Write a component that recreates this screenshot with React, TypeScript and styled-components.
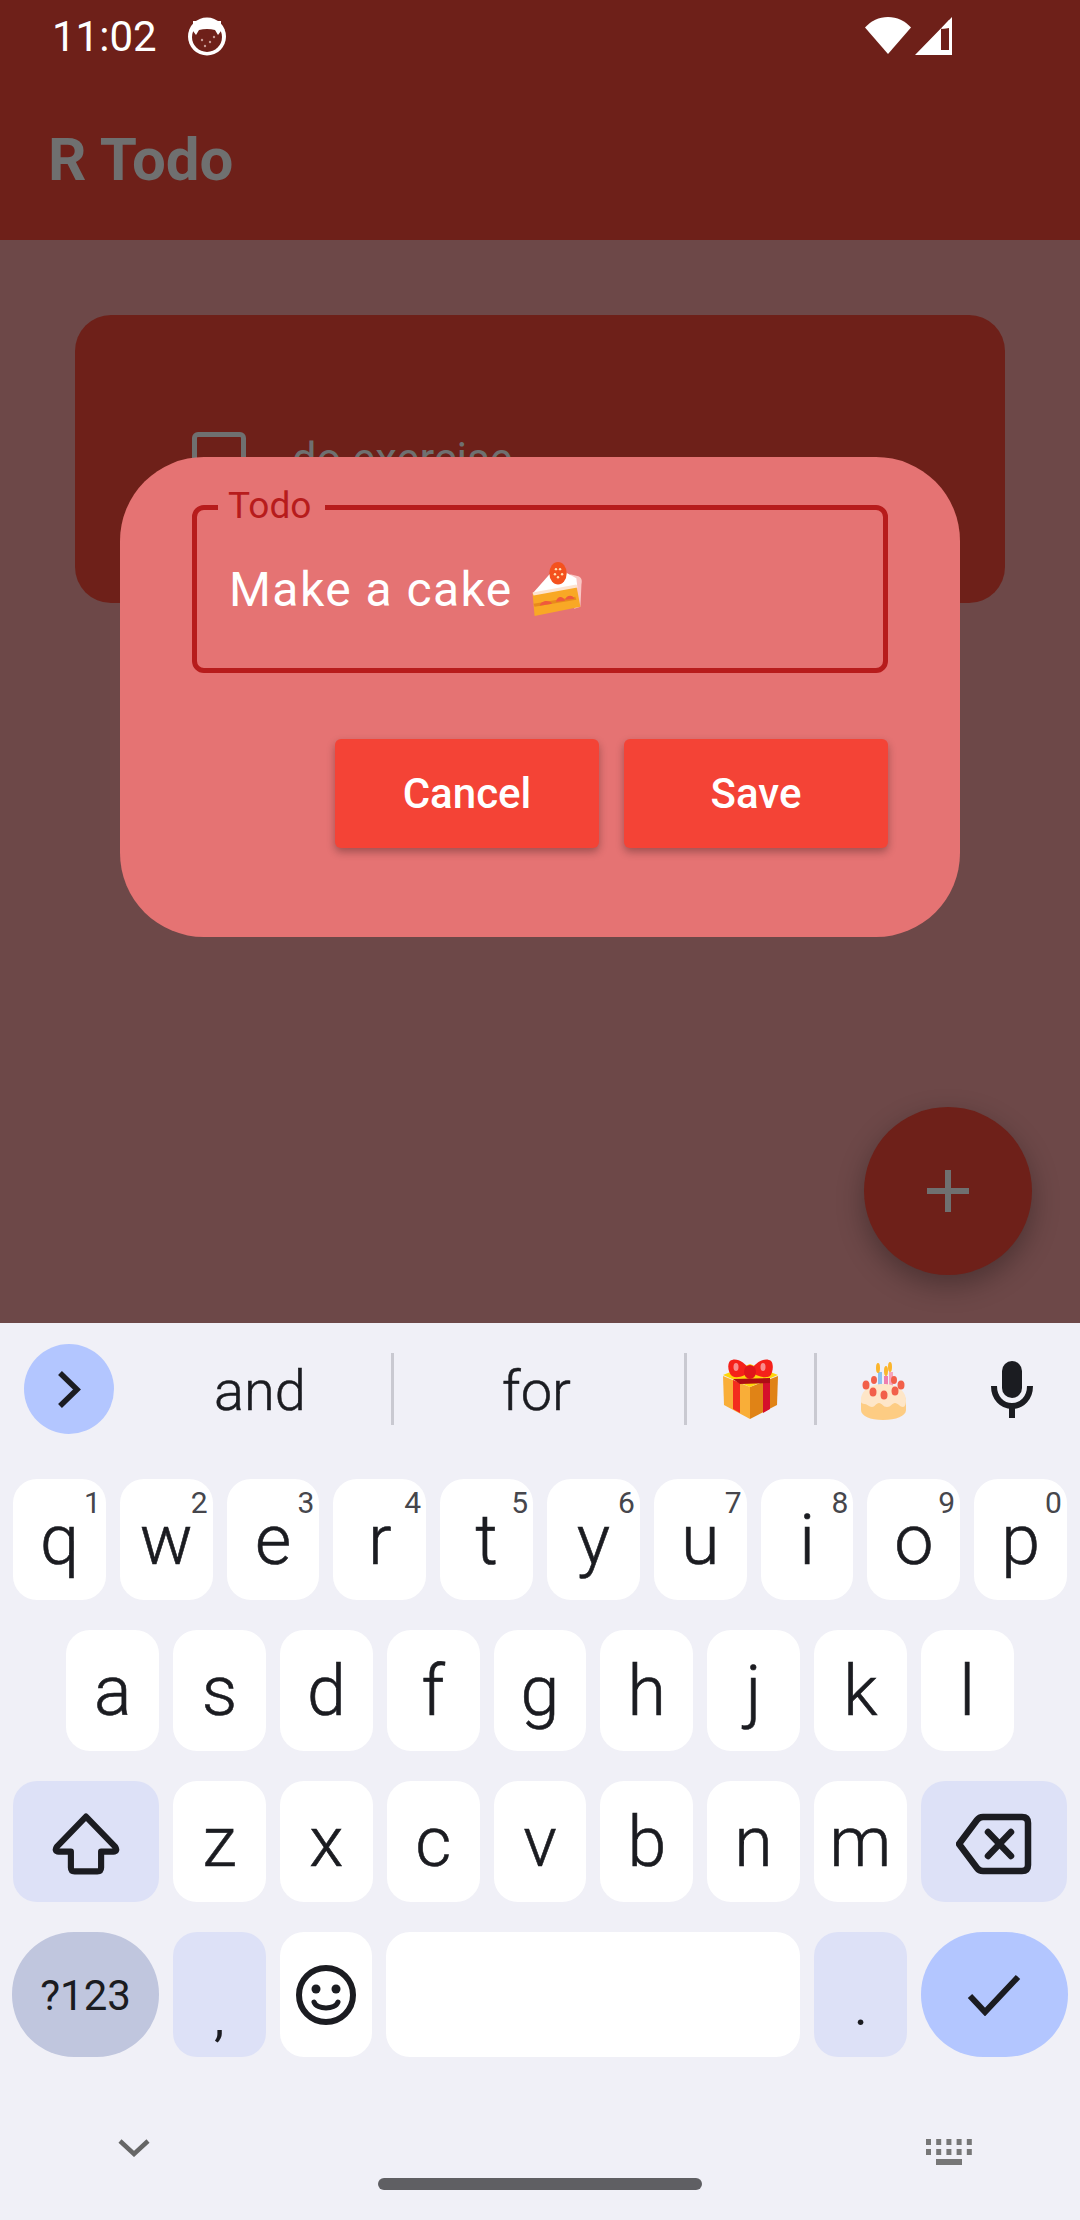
import styled, { createGlobalStyle } from "styled-components";

const GlobalStyle = createGlobalStyle`
  html, body {
    margin: 0;
    padding: 0;
    background: #f0f0f7;
  }
  * {
    box-sizing: border-box;
  }
`;

const Page = styled.div`
  width: 1080px;
  height: 2220px;
  position: relative;
  overflow: hidden;
  display: flex;
  flex-direction: column;
  font-family: Roboto, "Liberation Sans", sans-serif;
`;

const AppBar = styled.header`
  height: 240px;
  background: #6e2019;
  display: flex;
  flex-direction: column;
`;

const StatusBar = styled.div`
  height: 72px;
  padding: 0 128px 0 52px;
  display: flex;
  align-items: center;
  color: #fff;
  font-size: 42px;
`;

const StatusTime = styled.span`
  margin-right: 31px;
`;

const StatusRight = styled.div`
  margin-left: auto;
  display: flex;
  gap: 4px;
`;

const AppTitle = styled.h1`
  margin: 52px 0 0 48px;
  font-size: 60px;
  font-weight: 700;
  color: #6f7070;
`;

const Body = styled.main`
  height: 1083px;
  background: #6d4848;
  padding: 75px 75px 0;
`;

const TodoCard = styled.section`
  height: 288px;
  background: #6e2019;
  border-radius: 36px;
  padding-left: 117px;
  display: flex;
  align-items: center;
  gap: 46px;
`;

const Checkbox = styled.span`
  width: 54px;
  height: 54px;
  border: 5px solid #6f7070;
  border-radius: 6px;
`;

const TodoText = styled.span`
  font-size: 43.5px;
  color: #6f7070;
`;

const Dialog = styled.div`
  position: absolute;
  left: 120px;
  top: 457px;
  width: 840px;
  height: 480px;
  background: #e57373;
  border-radius: 84px;
  padding: 48px 72px 0;
`;

const Field = styled.div`
  position: relative;
  height: 168px;
  border: 5px solid #b71c1c;
  border-radius: 12px;
  padding-left: 32px;
  display: flex;
  align-items: center;
  gap: 18px;
  color: #fff;
  font-size: 48px;
  letter-spacing: 1.45px;
`;

const FieldLabel = styled.span`
  position: absolute;
  left: 21px;
  top: -26px;
  padding: 0 14px 0 10px;
  background: #e57373;
  color: #b71c1c;
  font-size: 37px;
  line-height: 44px;
  letter-spacing: 0;
`;

const DialogActions = styled.div`
  margin-top: 66px;
  display: flex;
  justify-content: flex-end;
  gap: 25px;
`;

const ActionButton = styled.button`
  width: 264px;
  height: 109px;
  border: none;
  border-radius: 6px;
  background: #f44336;
  color: #fff;
  font-family: inherit;
  font-size: 42px;
  font-weight: 500;
  box-shadow: 0 4px 8px rgba(0, 0, 0, 0.3);
`;

const Fab = styled.button`
  position: absolute;
  left: 864px;
  top: 1107px;
  width: 168px;
  height: 168px;
  border: none;
  border-radius: 50%;
  background: #6e2019;
  display: flex;
  align-items: center;
  justify-content: center;
  box-shadow: 0 10px 28px rgba(0, 0, 0, 0.3);
`;

const Keyboard = styled.div`
  height: 897px;
  background: #f0f0f7;
  padding-top: 21px;
  position: relative;
`;

const SuggestionStrip = styled.div`
  height: 90px;
  padding-left: 24px;
  display: flex;
  align-items: center;
`;

const ExpandButton = styled.span`
  width: 90px;
  height: 90px;
  border-radius: 50%;
  background: #b3c6ff;
  display: flex;
  align-items: center;
  justify-content: center;
`;

const Suggestion = styled.span<{ $width: number; $left?: number; $right?: number; $drop?: number }>`
  width: ${(p) => p.$width}px;
  padding: ${(p) => p.$drop ?? 0}px ${(p) => p.$right ?? 0}px 0 ${(p) => p.$left ?? 0}px;
  display: flex;
  justify-content: center;
  font-size: 56px;
  font-weight: 300;
  -webkit-text-stroke: 0.5px #1b1c21;
  color: #1b1c21;
`;

const StripDivider = styled.span`
  width: 3px;
  height: 72px;
  background: #c9c9d1;
`;

const KeyRows = styled.div`
  margin-top: 45px;
  display: flex;
  flex-direction: column;
  gap: 30px;
`;

const KeyRow = styled.div`
  display: flex;
  justify-content: center;
  gap: 14px;
`;

const Key = styled.span<{ $width?: number; $height?: number; $tone?: "plain" | "soft" | "mode" | "accent"; $pill?: boolean }>`
  position: relative;
  width: ${(p) => p.$width ?? 92.8}px;
  height: ${(p) => p.$height ?? 121}px;
  border-radius: ${(p) => (p.$pill ? "62px" : "24px")};
  background: ${(p) =>
    p.$tone === "soft" ? "#dde1f7" : p.$tone === "mode" ? "#c0c6de" : p.$tone === "accent" ? "#b3c6ff" : "#fff"};
  color: #1b1c21;
  display: flex;
  align-items: center;
  justify-content: center;
  font-size: 70px;
  font-weight: 300;
  -webkit-text-stroke: 0.6px #1b1c21;
  line-height: 1;
`;

const KeyHint = styled.span`
  position: absolute;
  top: 9px;
  right: 5px;
  font-size: 30px;
  font-weight: 400;
  -webkit-text-stroke: 0;
  color: #46464c;
`;

const ModeLabel = styled.span`
  font-size: 42px;
  font-weight: 400;
  -webkit-text-stroke: 0;
  margin-top: 3px;
`;

const Punctuation = styled.span<{ $drop: number }>`
  font-size: 50px;
  font-weight: 400;
  -webkit-text-stroke: 0;
  margin-top: ${(p) => p.$drop}px;
`;

const KeyIconSlot = styled.span`
  display: flex;
  margin-top: 5px;
`;

const NavRow = styled.div`
  position: absolute;
  left: 118px;
  right: 108px;
  top: 816px;
  display: flex;
  justify-content: space-between;
`;

const HomeHandle = styled.div`
  position: absolute;
  left: 378px;
  top: 855px;
  width: 324px;
  height: 12px;
  border-radius: 6px;
  background: #5f5f63;
`;

function CatBadge() {
  return (
    <svg width="38" height="39" viewBox="0 0 38 39">
      <circle cx="19" cy="19.5" r="19" fill="#fff" />
      <circle cx="19" cy="20" r="15" fill="#6e2019" />
      <path d="M5 4h28v10l-3 4-3-5c-5-1.500-11-1.500-16 0l-3 5-3-4z" fill="#fff" />
      <circle cx="14" cy="23" r="1.200" fill="#c79a95" />
      <circle cx="22" cy="25" r="1.200" fill="#c79a95" />
      <circle cx="17" cy="29" r="1.200" fill="#c79a95" />
      <circle cx="26" cy="20" r="1.200" fill="#c79a95" />
    </svg>
  );
}

function WifiIcon() {
  return (
    <svg width="46" height="37" viewBox="0 0 46 37">
      <path d="M0 10.500C6 4 14 0 23 0s17 4 23 10.500L23 37z" fill="#fff" />
    </svg>
  );
}

function SignalIcon() {
  return (
    <svg width="37" height="38" viewBox="0 0 37 38">
      <path d="M37 0v38H0zM26 11.500L26 33h8V11z" fill="#fff" fillRule="evenodd" />
      <path d="M26 12l8-9v8z" fill="#fff" />
    </svg>
  );
}

function Shortcake() {
  return (
    <svg width="52" height="55" viewBox="0 0 50 54">
      <path d="M38 12l8 2c3 1 4 4 3 8l-1 22-6 2z" fill="#f9c6c4" />
      <path d="M1 31L24 5l20 11 1 9z" fill="#fff" />
      <path d="M1 31l43-8 4 21L3 53z" fill="#f9a825" />
      <path d="M1 30l43-8 1 3L2 33z" fill="#fde3d0" />
      <path d="M2 41l41-7 1 3L3 44z" fill="#e8891c" />
      <path d="M8 43c1-6 11-6 12-2zM24 39c1-6 7-6 9-1zM33 37c1-5 8-5 9-1z" fill="#ef5a3c" />
      <ellipse cx="26" cy="11" rx="8.500" ry="11" fill="#f4511e" />
      <circle cx="24" cy="7" r="1.200" fill="#ffe0b2" />
      <circle cx="28" cy="7" r="1.200" fill="#ffe0b2" />
      <circle cx="23" cy="12" r="1.200" fill="#ffe0b2" />
      <circle cx="26" cy="15" r="1.200" fill="#ffe0b2" />
      <circle cx="30" cy="12" r="1.200" fill="#ffe0b2" />
    </svg>
  );
}

function GiftEmoji() {
  return (
    <svg width="55" height="60" viewBox="0 0 55 60">
      <path d="M0 17l27 11v32L1 46z" fill="#f9ae38" />
      <path d="M55 17L27 28v32l27-14z" fill="#e08316" />
      <path d="M0 16l27-11 28 11-28 12z" fill="#ffd60a" />
      <path d="M10 21l7 3v30l-7-4z" fill="#f32c1e" />
      <path d="M40 24l7-3v29l-7 4z" fill="#d5102b" />
      <path d="M10 20l37-1v5L17 25z" fill="#ad0e13" />
      <path d="M27 12C22 2 12-2 7 2c-3 3-2 12 2 15 5 3 13 0 18-5z" fill="#f5211a" />
      <path d="M27 12C33 2 43-2 48 2c3 3 2 12-1 15-5 3-14 0-20-5z" fill="#f5211a" />
      <ellipse cx="27" cy="13" rx="6" ry="7" fill="#e0161a" />
      <ellipse cx="13" cy="8" rx="2.500" ry="4" fill="#f98c8c" />
      <ellipse cx="40" cy="8" rx="2.500" ry="4" fill="#f98c8c" />
    </svg>
  );
}

function CakeEmoji() {
  return (
    <svg width="47" height="58" viewBox="0 0 47 58">
      <path d="M18 10h4v16h-4z" fill="#8ec1ee" />
      <path d="M24 14h4v14h-4z" fill="#ef7fae" />
      <path d="M29 10h4v16h-4z" fill="#f6a5bb" />
      <ellipse cx="18" cy="6" rx="2" ry="5" fill="#fbb52c" />
      <ellipse cx="26" cy="9" rx="2" ry="5" fill="#fbb52c" />
      <ellipse cx="30" cy="5" rx="2" ry="5" fill="#fbb52c" />
      <path d="M1 40c0-10 10-17 22-17s23 7 23 17v8c0 6-10 10-23 10S1 54 1 48z" fill="#fdcc83" />
      <path d="M1 38c0-10 10-16 22-16s23 6 23 16c0 4-1 7-3 7-3 0-5-4-8-4s-4 4-8 4-5-4-8-4-4 4-7 4-5-3-7-3-5-1-4-4z" fill="#fee6c8" />
      <ellipse cx="6" cy="23" rx="3.500" ry="4.500" fill="#f2604a" />
      <ellipse cx="14" cy="18" rx="3" ry="4" fill="#f2604a" />
      <ellipse cx="13" cy="30" rx="3.500" ry="4.500" fill="#f2604a" />
      <ellipse cx="24" cy="33" rx="3.500" ry="4.500" fill="#f2604a" />
      <ellipse cx="35" cy="29" rx="3.500" ry="4.500" fill="#f2604a" />
      <ellipse cx="34" cy="18" rx="3" ry="4" fill="#f2604a" />
      <ellipse cx="41" cy="23" rx="3.500" ry="4.500" fill="#f2604a" />
    </svg>
  );
}

function MicIcon() {
  return (
    <svg width="42" height="57" viewBox="0 0 42 57">
      <rect x="11" y="0" width="20" height="37" rx="10" fill="#1b1c21" />
      <path d="M3 25c0 12 8 20 18 20s18-8 18-20" fill="none" stroke="#1b1c21" strokeWidth="6" />
      <path d="M21 44v13" stroke="#1b1c21" strokeWidth="6" />
    </svg>
  );
}

function ShiftIcon() {
  return (
    <svg width="68" height="64" viewBox="0 0 72 66">
      <path d="M36 4L67 36c2 3 1 5-2 5H52v17c0 3-1 4-4 4H24c-3 0-4-1-4-4V41H7c-3 0-4-2-2-5z" fill="none" stroke="#1b1c21" strokeWidth="6.500" strokeLinejoin="round" />
    </svg>
  );
}

function BackspaceIcon() {
  return (
    <svg width="76" height="62" viewBox="0 0 76 62">
      <path d="M3 31L21 7c1.500-2 3-3 6-3h39c4 0 6 2 6 6v42c0 4-2 6-6 6H27c-3 0-4.500-1-6-3z" fill="none" stroke="#1b1c21" strokeWidth="6.500" strokeLinejoin="round" />
      <path d="M32 19l23 24M55 19L32 43" stroke="#1b1c21" strokeWidth="6.500" strokeLinecap="round" />
    </svg>
  );
}

function SmileIcon() {
  return (
    <svg width="60" height="60" viewBox="0 0 60 60">
      <circle cx="30" cy="30" r="27" fill="none" stroke="#1b1c21" strokeWidth="6" />
      <circle cx="20" cy="24" r="4.500" fill="#1b1c21" />
      <circle cx="40" cy="24" r="4.500" fill="#1b1c21" />
      <path d="M18 37c3 8 21 8 24 0" fill="none" stroke="#1b1c21" strokeWidth="5" strokeLinecap="round" />
    </svg>
  );
}

function KeyboardGlyph() {
  const dots = [0, 1, 2, 3, 4];
  return (
    <svg width="46" height="27" viewBox="0 0 46 27">
      {dots.map((d) => (
        <rect key={`a${d}`} x={d * 10.2} y="0" width="5" height="6" fill="#777" />
      ))}
      {dots.map((d) => (
        <rect key={`b${d}`} x={d * 10.2} y="10" width="5" height="6" fill="#777" />
      ))}
      <rect x="10" y="20" width="26" height="6" fill="#777" />
    </svg>
  );
}

const topRow = [["q", "1"], ["w", "2"], ["e", "3"], ["r", "4"], ["t", "5"], ["y", "6"], ["u", "7"], ["i", "8"], ["o", "9"], ["p", "0"]];

export default function App() {
  return (
    <Page>
      <GlobalStyle />
      <AppBar>
        <StatusBar>
          <StatusTime>11:02</StatusTime>
          <CatBadge />
          <StatusRight>
            <WifiIcon />
            <SignalIcon />
          </StatusRight>
        </StatusBar>
        <AppTitle>R Todo</AppTitle>
      </AppBar>

      <Body>
        <TodoCard>
          <Checkbox />
          <TodoText>do exercise</TodoText>
        </TodoCard>
      </Body>

      <Dialog>
        <Field>
          <FieldLabel>Todo</FieldLabel>
          Make a cake
          <Shortcake />
        </Field>
        <DialogActions>
          <ActionButton>Cancel</ActionButton>
          <ActionButton>Save</ActionButton>
        </DialogActions>
      </Dialog>

      <Fab>
        <svg width="42" height="42" viewBox="0 0 42 42">
          <path d="M18 0h6v18h18v6H24v18h-6V24H0v-6h18z" fill="#6f7070" />
        </svg>
      </Fab>

      <Keyboard>
        <SuggestionStrip>
          <ExpandButton>
            <svg width="24" height="37" viewBox="0 0 24 37">
              <path d="M3 2l17 16.500L3 35" fill="none" stroke="#1b1c21" strokeWidth="5.500" />
            </svg>
          </ExpandButton>
          <Suggestion $width={277} $left={15} $drop={4}>and</Suggestion>
          <StripDivider />
          <Suggestion $width={290} $right={5} $drop={4}>for</Suggestion>
          <StripDivider />
          <Suggestion $width={127}><GiftEmoji /></Suggestion>
          <StripDivider />
          <Suggestion $width={132} $drop={4}><CakeEmoji /></Suggestion>
          <Suggestion $width={126}><MicIcon /></Suggestion>
        </SuggestionStrip>

        <KeyRows>
          <KeyRow>
            {topRow.map(([letter, hint]) => (
              <Key key={letter}>
                {letter}
                <KeyHint>{hint}</KeyHint>
              </Key>
            ))}
          </KeyRow>
          <KeyRow>
            {"asdfghjkl".split("").map((letter) => (
              <Key key={letter}>{letter}</Key>
            ))}
          </KeyRow>
          <KeyRow>
            <Key $width={146.4} $tone="soft"><KeyIconSlot><ShiftIcon /></KeyIconSlot></Key>
            {"zxcvbnm".split("").map((letter) => (
              <Key key={letter}>{letter}</Key>
            ))}
            <Key $width={146.4} $tone="soft"><KeyIconSlot><BackspaceIcon /></KeyIconSlot></Key>
          </KeyRow>
          <KeyRow>
            <Key $width={146.4} $height={125} $tone="mode" $pill><ModeLabel>?123</ModeLabel></Key>
            <Key $height={125} $tone="soft"><Punctuation $drop={46}>,</Punctuation></Key>
            <Key $height={125}><SmileIcon /></Key>
            <Key $width={414} $height={125} />
            <Key $height={125} $tone="soft"><Punctuation $drop={26}>.</Punctuation></Key>
            <Key $width={146.4} $height={125} $tone="accent" $pill>
              <svg width="54" height="42" viewBox="0 0 54 42">
                <path d="M3 22l15 16L51 3" fill="none" stroke="#1b1c21" strokeWidth="6" />
              </svg>
            </Key>
          </KeyRow>
        </KeyRows>

        <NavRow>
          <svg width="32" height="18" viewBox="0 0 32 18">
            <path d="M2 2l14 13L30 2" fill="none" stroke="#666" strokeWidth="4.500" />
          </svg>
          <KeyboardGlyph />
        </NavRow>
        <HomeHandle />
      </Keyboard>
    </Page>
  );
}
